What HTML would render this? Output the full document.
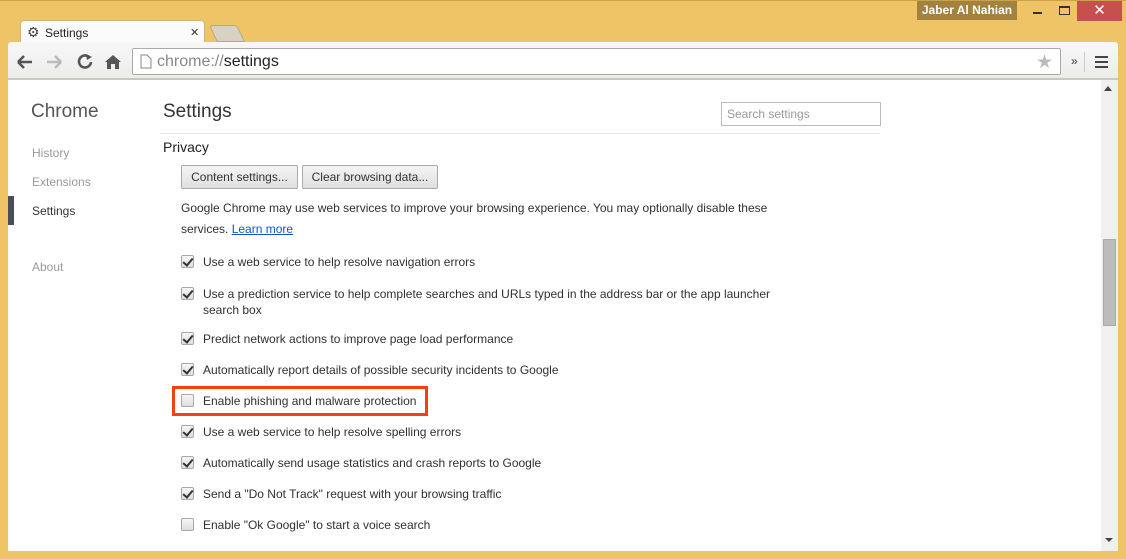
<!DOCTYPE html><html><head><style>
*{margin:0;padding:0;box-sizing:border-box}
body{width:1126px;height:559px;background:#EFC466;position:relative;overflow:hidden;font-family:"Liberation Sans",sans-serif;font-size:12px;color:#303030}
.a{position:absolute}
.cb{position:absolute;left:181px;width:13px;height:13px;border:1px solid #a8a8a8;border-radius:2px;background:linear-gradient(#f6f6f6,#dedede)}
.cb.c::after{content:"";position:absolute;left:3px;top:0px;width:4px;height:8px;border:solid #333;border-width:0 2px 2px 0;transform:rotate(40deg)}
.t{position:absolute;left:203px;font-size:12px;color:#303030;line-height:15px}
.btn{position:absolute;top:165px;height:24px;border:1px solid #aaa;border-radius:2px;background:linear-gradient(#f4f4f4,#e0e0e0);font-size:12px;line-height:23px;text-align:center;color:#333}
</style></head><body>
<div class="a" style="left:0;top:0;width:1126px;height:1px;background:#c9a24a"></div>
<div class="a" style="left:917px;top:1px;width:100px;height:19px;background:#a3823f;color:#fff;font-weight:bold;font-size:12px;line-height:19px;text-align:center">Jaber Al Nahian</div>
<div class="a" style="left:1033px;top:12px;width:9px;height:2px;background:#333"></div>
<div class="a" style="left:1059px;top:6px;width:11px;height:9px;border:1px solid #333;border-top-width:2px"></div>
<div class="a" style="left:1077px;top:1px;width:45px;height:20px;background:#c7504f;color:#fff;text-align:center;font-size:15px;line-height:20px">✕</div>
<div class="a" style="left:213px;top:25px;width:28px;height:17px;background:#d8d2c2;transform:skewX(25deg);border-radius:3px 3px 0 0;border:1px solid #b8a880"></div>
<div class="a" style="left:20px;top:20px;width:185px;height:24px;background:#fbfbfb;border-radius:4px 4px 0 0;border:1px solid #c8b888;border-bottom:none"></div>
<div class="a" style="left:27px;top:24px;font-size:14px;color:#444">⚙</div>
<div class="a" style="left:45px;top:26px;font-size:12px;color:#222">Settings</div>
<div class="a" style="left:190px;top:26px;font-size:11px;color:#333">✕</div>
<div class="a" style="left:8px;top:42px;width:1110px;height:37px;background:linear-gradient(#f8f8f8,#ececec);border-radius:3px 3px 0 0;border-bottom:1px solid #c8c8c8"></div>
<svg class="a" style="left:15px;top:52px" width="110" height="20"><path d="M3 10h14M3 10l6-6M3 10l6 6" stroke="#555" stroke-width="2.6" fill="none"/><path d="M32 10h14M46 10l-6-6M46 10l-6 6" stroke="#bbb" stroke-width="2.6" fill="none"/><path d="M74 5a6 6 0 1 0 2 5" stroke="#555" stroke-width="2.6" fill="none"/><path d="M71 2l6 3-5 3z" fill="#555"/><path d="M90 10l8-7 8 7h-2v7h-4v-5h-4v5h-4v-7z" fill="#555"/></svg>
<div class="a" style="left:132px;top:48px;width:929px;height:27px;background:#fff;border:1px solid #aaa;border-radius:2px"></div>
<svg class="a" style="left:140px;top:54px" width="12" height="15"><path d="M1 1h6l4 4v9H1z" fill="#fff" stroke="#888"/></svg>
<div class="a" style="left:157px;top:53px;font-size:16px;color:#888">chrome://<span style="color:#222">settings</span></div>
<div class="a" style="left:1036px;top:51px;font-size:19px;color:#bbb">★</div>
<div class="a" style="left:1071px;top:54px;font-size:12px;color:#333">»</div>
<div class="a" style="left:1084px;top:52px;width:1px;height:20px;background:#ccc"></div>
<div class="a" style="left:1095px;top:56px;width:13px;height:2px;background:#444;box-shadow:0 5px #444,0 10px #444"></div>
<div class="a" style="left:8px;top:80px;width:1110px;height:471px;background:#fff"></div>
<div class="a" style="left:1101px;top:80px;width:17px;height:471px;background:#f0f0f0"></div>
<div class="a" style="left:1103px;top:239px;width:13px;height:87px;background:#bcbcbc;border:1px solid #aaa"></div>
<div class="a" style="left:1104px;top:86px;width:0;height:0;border:4px solid transparent;border-bottom:5px solid #444;border-top:0"></div>
<div class="a" style="left:1105px;top:538px;width:0;height:0;border:4px solid transparent;border-top:4px solid #444;border-bottom:0"></div>
<div class="a" style="left:8px;top:196px;width:6px;height:29px;background:#4a4e58"></div>
<div class="a" style="left:31px;top:101px;font-size:19px;color:#555">Chrome</div>
<div class="a" style="left:32px;top:146px;color:#999">History</div>
<div class="a" style="left:32px;top:175px;color:#999">Extensions</div>
<div class="a" style="left:32px;top:204px;color:#333">Settings</div>
<div class="a" style="left:32px;top:260px;color:#999">About</div>
<div class="a" style="left:163px;top:101px;font-size:19px;color:#333">Settings</div>
<div class="a" style="left:721px;top:102px;width:160px;height:24px;border:1px solid #bbb;color:#999;padding-left:5px;line-height:23px">Search settings</div>
<div class="a" style="left:160px;top:133px;width:720px;height:1px;background:#e8e8e8"></div>
<div class="a" style="left:163px;top:139px;font-size:14px;color:#222">Privacy</div>
<div class="btn" style="left:181px;width:117px">Content settings...</div>
<div class="btn" style="left:302px;width:136px">Clear browsing data...</div>
<div class="a" style="left:181px;top:198px;line-height:21px;width:600px">Google Chrome may use web services to improve your browsing experience. You may optionally disable these<br>services. <span style="color:#15c;text-decoration:underline">Learn more</span></div>
<div class="cb c" style="top:255px"></div><div class="t" style="top:255px">Use a web service to help resolve navigation errors</div>
<div class="cb c" style="top:287px"></div><div class="t" style="top:286px;width:580px;line-height:16px">Use a prediction service to help complete searches and URLs typed in the address bar or the app launcher search box</div>
<div class="cb c" style="top:332px"></div><div class="t" style="top:332px">Predict network actions to improve page load performance</div>
<div class="cb c" style="top:363px"></div><div class="t" style="top:363px">Automatically report details of possible security incidents to Google</div>
<div class="cb" style="top:394px"></div><div class="t" style="top:394px">Enable phishing and malware protection</div>
<div class="a" style="left:172px;top:386px;width:256px;height:30px;border:3px solid #f5400f"></div>
<div class="cb c" style="top:425px"></div><div class="t" style="top:425px">Use a web service to help resolve spelling errors</div>
<div class="cb c" style="top:456px"></div><div class="t" style="top:456px">Automatically send usage statistics and crash reports to Google</div>
<div class="cb c" style="top:487px"></div><div class="t" style="top:487px">Send a "Do Not Track" request with your browsing traffic</div>
<div class="cb" style="top:518px"></div><div class="t" style="top:518px">Enable "Ok Google" to start a voice search</div>
</body></html>
